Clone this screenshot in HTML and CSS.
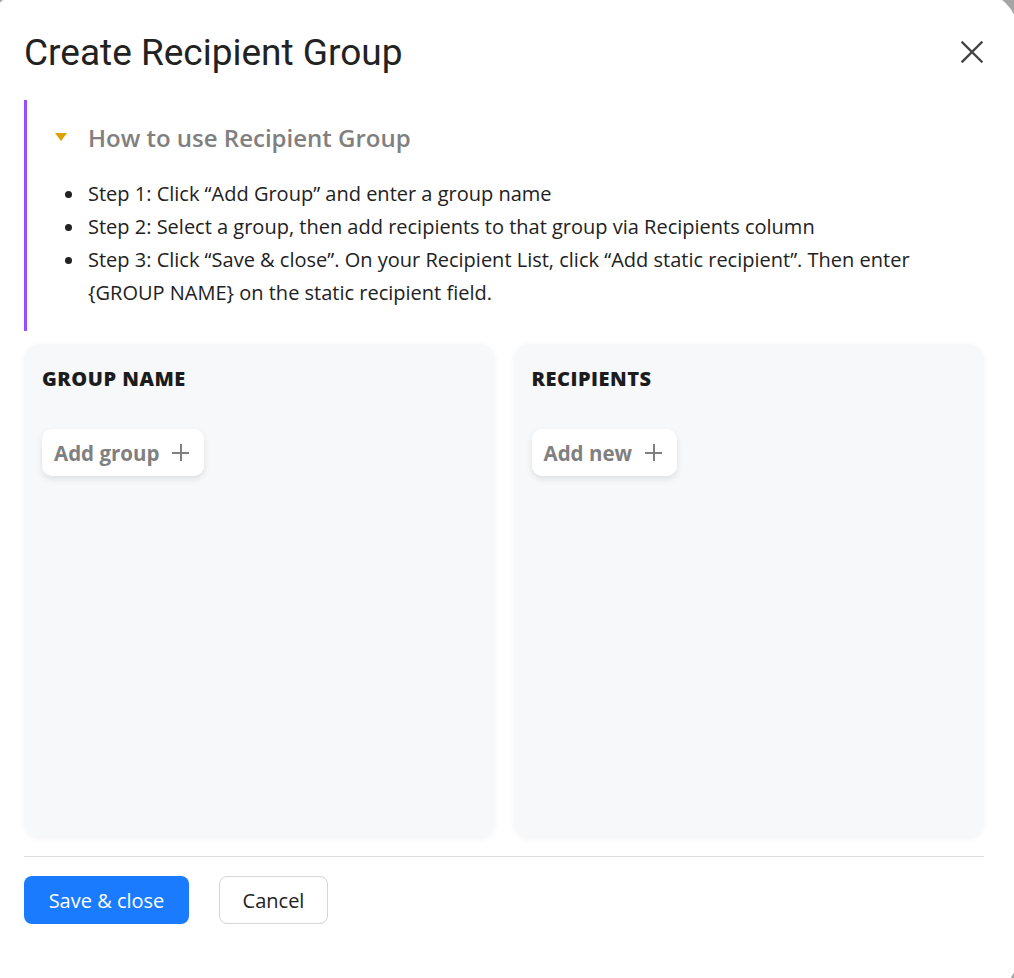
FILE: index.html
```html
<!DOCTYPE html>
<html lang="en">
  <head>
    <meta charset="UTF-8" />
    <title>Create Recipient Group</title>
    <link rel="stylesheet" href="styles.css">
  </head>
  <body>
    <div class="modal">
      <div class="modal-header">
        <h1 class="modal-title">Create Recipient Group</h1>
        <button class="close-btn" aria-label="Close">
          <svg width="22" height="22" viewBox="0 0 22 22">
            <path d="M1.5 1.5 L20.5 20.5 M20.5 1.5 L1.5 20.5" stroke="#444" stroke-width="2.4" stroke-linecap="square"/>
          </svg>
        </button>
      </div>

      <div class="howto">
        <div class="howto-head">
          <span class="caret"></span>
          <span class="howto-title">How to use Recipient Group</span>
        </div>
        <ul class="steps">
          <li>Step 1: Click “Add Group” and enter a group name</li>
          <li>Step 2: Select a group, then add recipients to that group via Recipients column</li>
          <li>Step 3: Click “Save &amp; close”. On your Recipient List, click “Add static recipient”. Then enter {GROUP NAME} on the static recipient field.</li>
        </ul>
      </div>

      <div class="columns">
        <div class="panel">
          <h2 class="panel-title">GROUP NAME</h2>
          <button class="add-btn">Add group <span class="plus"></span></button>
        </div>
        <div class="panel">
          <h2 class="panel-title">RECIPIENTS</h2>
          <button class="add-btn">Add new <span class="plus"></span></button>
        </div>
      </div>

      <div class="modal-footer">
        <button class="btn btn-primary">Save &amp; close</button>
        <button class="btn btn-default">Cancel</button>
      </div>
    </div>
  </body>
</html>
```

FILE: styles.css
```css
*{
    box-sizing: border-box;
    margin: 0;
    padding: 0;
}
body{
    background-color: #a5a5a5;
    font-family: "Open Sans", "Noto Sans", sans-serif;
    color: #222;
    overflow: hidden;
}
.modal{
    width: 1031px;
    height: 1003px;
    margin: -8px 0 0 -13px;
    padding: 0 34px 0 37px;
    background: #fff;
    border-radius: 40px;
}
.modal-header{
    display: flex;
    align-items: center;
    justify-content: space-between;
    height: 108px;
    padding-top: 12px;
}
.modal-title{
    font-family: Roboto, "Noto Sans", sans-serif;
    font-weight: 400;
    font-size: 37px;
    color: #222;
}
.close-btn{
    border: none;
    background: none;
    width: 22px;
    height: 22px;
    margin-right: 1px;
    cursor: pointer;
}
.close-btn svg{
    display: block;
}
/* how to use */
.howto{
    border-left: 3px solid #9a4dff;
    padding: 20px 0 22px 28px;
}
.howto-head{
    display: flex;
    align-items: center;
    height: 34px;
}
.caret{
    width: 0;
    height: 0;
    border-left: 6px solid transparent;
    border-right: 6px solid transparent;
    border-top: 8px solid #dba100;
    margin-right: 21px;
}
.howto-title{
    font-size: 24px;
    font-weight: 600;
    color: #808080;
}
.steps{
    list-style: none;
    margin-top: 23px;
    font-size: 20px;
    line-height: 33px;
    color: #222;
}
.steps li{
    padding-left: 33px;
}
.steps li::before{
    content: '';
    display: inline-block;
    width: 7px;
    height: 7px;
    border-radius: 50%;
    background: #222;
    margin: 0 16px 0 -23px;
    vertical-align: 3px;
}
/* columns */
.columns{
    display: grid;
    grid-template-columns: 1fr 1fr;
    gap: 19px;
    margin-top: 13px;
    height: 494px;
}
.panel{
    background: #f7f8fa;
    border-radius: 16px;
    box-shadow: 0 1px 6px rgba(0, 0, 0, 0.05);
    padding: 23px 18px;
}
.panel-title{
    font-size: 20px;
    font-weight: 800;
    letter-spacing: 0.5px;
    color: #1c1c1c;
    line-height: 24px;
}
.add-btn{
    display: inline-flex;
    align-items: center;
    gap: 13px;
    margin-top: 38px;
    height: 47px;
    padding: 0 15px 0 12px;
    border: none;
    border-radius: 10px;
    background: #fff;
    box-shadow: 0 3px 6px rgba(0, 0, 0, 0.1);
    font-family: "Open Sans", "Noto Sans", sans-serif;
    font-size: 20.5px;
    font-weight: 700;
    color: #808080;
    cursor: pointer;
}
.plus{
    position: relative;
    width: 17px;
    height: 17px;
}
.plus::before,
.plus::after{
    content: '';
    position: absolute;
    background: #808080;
}
.plus::before{
    left: 8px;
    top: 0;
    width: 1.5px;
    height: 17px;
}
.plus::after{
    top: 8px;
    left: 0;
    height: 1.5px;
    width: 17px;
}
/* footer */
.modal-footer{
    display: flex;
    gap: 30px;
    margin-top: 18px;
    padding-top: 19px;
    border-top: 1px solid #dcdcdc;
}
.btn{
    height: 48px;
    border-radius: 8px;
    font-family: "Open Sans", "Noto Sans", sans-serif;
    font-size: 20px;
    cursor: pointer;
}
.btn-primary{
    width: 165px;
    background: #1a7bff;
    border: none;
    color: #fff;
}
.btn-default{
    width: 109px;
    background: #fff;
    border: 1px solid #d6d6d6;
    color: #222;
}
```
